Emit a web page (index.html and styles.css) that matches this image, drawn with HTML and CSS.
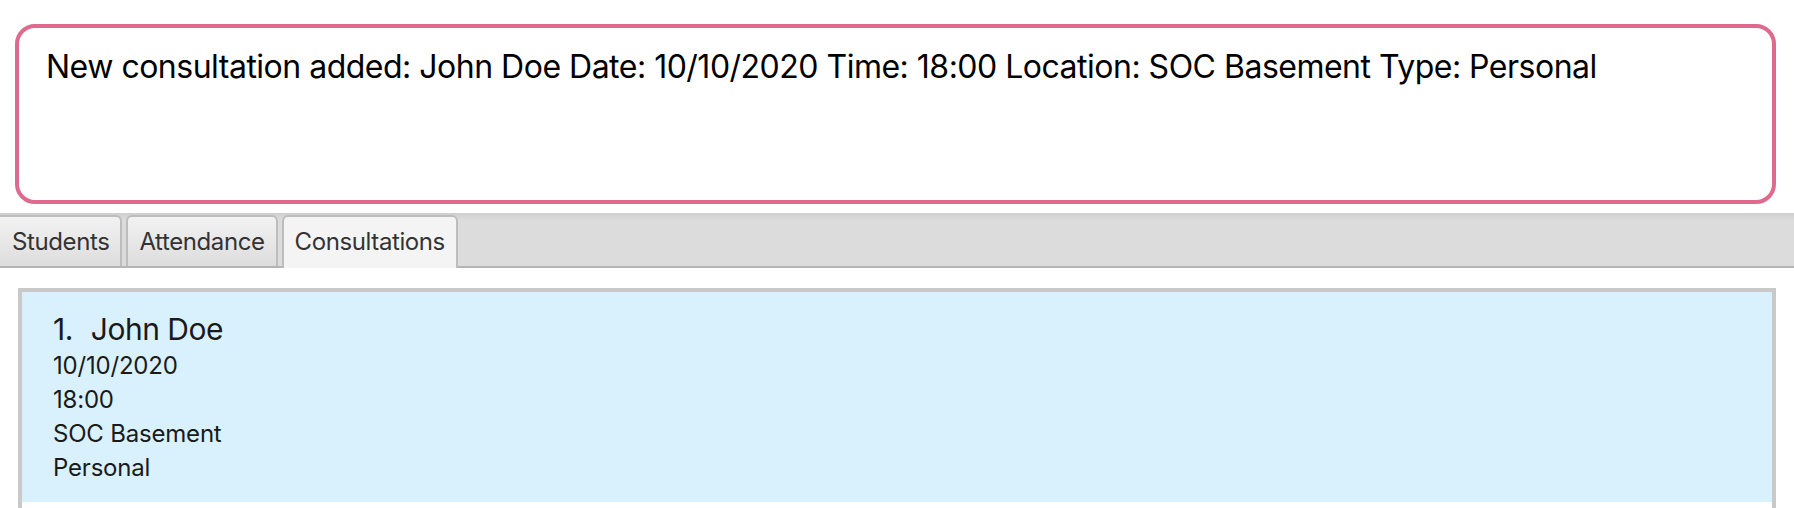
FILE: index.html
```html
<!DOCTYPE html>
<html lang="en">
<head>
<meta charset="utf-8">
<title>Consultations</title>
<link rel="stylesheet" href="styles.css">
</head>
<body>
<div class="app">
  <div class="result">
    <p class="result-text">New consultation added: John Doe Date: 10/10/2020 Time: 18:00 Location: SOC Basement Type: Personal</p>
  </div>
  <div class="tabbar">
    <div class="tab">Students</div>
    <div class="tab">Attendance</div>
    <div class="tab tab-active">Consultations</div>
  </div>
  <div class="panel">
    <div class="list">
      <div class="cell">
        <div class="name"><span class="index">1.</span><span>John Doe</span></div>
        <div class="detail">10/10/2020</div>
        <div class="detail">18:00</div>
        <div class="detail">SOC Basement</div>
        <div class="detail">Personal</div>
      </div>
    </div>
  </div>
</div>
</body>
</html>
```
FILE: styles.css
```css
html, body {
  margin: 0;
  padding: 0;
  background: #ffffff;
}
body {
  font-family: Inter, "Noto Sans", sans-serif;
  width: 1794px;
  height: 508px;
  overflow: hidden;
}
.app {
  display: flex;
  flex-direction: column;
  height: 508px;
}
.result {
  flex: none;
  margin: 24px 18px 0 15px;
  height: 180px;
  box-sizing: border-box;
  border: 4px solid #de6a8e;
  border-radius: 20px;
  padding: 19px 27px;
}
.result-text {
  margin: 0;
  font-size: 32px;
  line-height: 40px;
  letter-spacing: -0.5px;
  color: #000;
}
.tabbar {
  flex: none;
  margin-top: 9px;
  height: 55px;
  box-sizing: border-box;
  padding-top: 2px;
  display: flex;
  align-items: flex-end;
  gap: 4px;
  background: linear-gradient(#cecece, #dcdcdc 7px);
  border-bottom: 2px solid #b4b4b4;
}
.tab {
  height: 51px;
  box-sizing: border-box;
  padding: 0 11px;
  display: flex;
  align-items: center;
  font-size: 24px;
  letter-spacing: -0.4px;
  color: #333;
  border: 2px solid #bdbdbd;
  border-bottom: none;
  border-radius: 6px 6px 0 0;
  background: linear-gradient(#f2f2f2, #dddddd);
}
.tab:first-child {
  border-left: none;
  border-top-left-radius: 0;
  padding-left: 12px;
}
.tab-active {
  background: #f4f4f4;
  margin-bottom: -2px;
  height: 53px;
  padding-bottom: 2px;
}
.panel {
  flex: 1;
  min-height: 0;
  display: flex;
  flex-direction: column;
  padding: 20px 18px 0 18px;
}
.list {
  flex: 1;
  border: 4px solid #c9c9c9;
  border-bottom: none;
  background: #fff;
}
.cell {
  background: #d9f1fd;
  padding: 17px 31px 17px 31px;
  color: #1a1a1a;
}
.name {
  font-size: 30px;
  line-height: 40px;
  letter-spacing: -0.5px;
  display: flex;
}
.index {
  margin-right: 18px;
}
.detail {
  font-size: 24px;
  line-height: 34px;
  letter-spacing: -0.2px;
}
```
